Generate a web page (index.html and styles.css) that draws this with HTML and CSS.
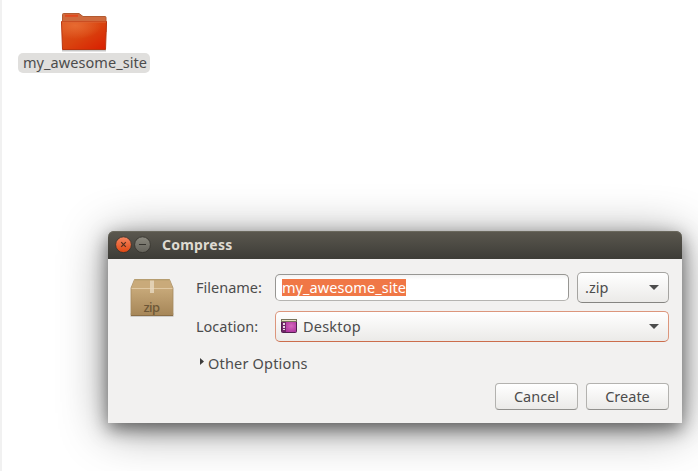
FILE: index.html
```html
<!DOCTYPE html>
<html lang="en">
<head>
<meta charset="utf-8">
<title>Compress</title>
<link rel="stylesheet" href="styles.css">
</head>
<body>
<main class="desktop">
  <div class="file">
    <svg class="folder" width="48" height="40" viewBox="0 0 48 40">
      <defs>
        <linearGradient id="front" x1="0" y1="0" x2="1" y2="1"><stop offset="0" stop-color="#d9551f"/><stop offset=".5" stop-color="#d9430f"/><stop offset="1" stop-color="#d91d00"/></linearGradient>
        <radialGradient id="shine" cx=".3" cy=".15" r=".6"><stop offset="0" stop-color="#e76a31"/><stop offset="1" stop-color="#e76a31" stop-opacity="0"/></radialGradient>
      </defs>
      <path d="M2 38.500H46" stroke="#000" stroke-opacity=".22" stroke-width="2"/>
      <path d="M2.500 20V2.500Q2.500 1.500 3.500 1.500H19L23 4.500H45Q46 4.500 46 5.500V20Z" fill="#cf6a3d" stroke="#b25a30"/>
      <path d="M5 3.800H18" stroke="#e2491d" stroke-width="2"/>
      <path d="M1.500 9.500H46.500L45.500 37.500H2.500Z" fill="url(#front)" stroke="#b8340e"/>
      <path d="M2 10H46L45 27Q28 24 3 33Z" fill="url(#shine)"/>
      <path d="M2 10H46" stroke="#dc6636"/>
    </svg>
    <span class="file-name"><span class="t-site">my_awesome_site</span></span>
  </div>

  <section class="dialog">
    <header class="titlebar">
      <svg width="38" height="20" viewBox="0 0 38 20">
        <defs>
          <linearGradient id="close" x2="0" y2="1"><stop offset="0" stop-color="#f58762"/><stop offset="1" stop-color="#e04711"/></linearGradient>
          <linearGradient id="mini" x2="0" y2="1"><stop offset="0" stop-color="#8b897f"/><stop offset="1" stop-color="#65635b"/></linearGradient>
        </defs>
        <circle cx="9.500" cy="9.700" r="7.900" fill="url(#close)" stroke="#35332e" stroke-width=".9"/>
        <path d="M7.200 7.200l4.600 4.600M11.800 7.200l-4.600 4.600" stroke="#54301f" stroke-width="1.200"/>
        <circle cx="28.500" cy="9.700" r="7.900" fill="url(#mini)" stroke="#35332e" stroke-width=".9"/>
        <path d="M25 9.500h7" stroke="#36342f"/>
      </svg>
      <h1><span class="t-title">Compress</span></h1>
    </header>
    <div class="content">
      <svg class="box" width="46" height="44" viewBox="0 0 46 44">
        <defs>
          <linearGradient id="card" x2="0" y2="1"><stop offset="0" stop-color="#d2b484"/><stop offset="1" stop-color="#a68658"/></linearGradient>
        </defs>
        <path d="M1.500 36V40H44.500V36Z" fill="#000" fill-opacity=".15"/>
        <path d="M5.500 2.500H40.500L44 11V38.500H2V11Z" fill="url(#card)" stroke="#a48a60" stroke-width=".8"/>
        <path d="M5.500 3H40.500L43.500 11H2.500Z" fill="#c9aa7a"/>
        <path d="M5.500 3H40.500" stroke="#baa06f"/>
        <path d="M2.500 11.500H43.500" stroke="#e0c8a2"/>
        <path d="M21 3.500H25V16H21Z" fill="#eadcc5" fill-opacity=".75"/>
        <path d="M2 38.500H44" stroke="#8b6e46"/>
        <text class="zip" x="14.500" y="35" textLength="16.500">zip</text>
      </svg>
      <div class="form">
        <div class="row">
          <label><span class="t-file">Filename:</span></label>
          <div class="entry"><span class="selected"><span class="t-site">my_awesome_site</span></span></div>
          <div class="combo ext"><span class="t-ext">.zip</span><i class="arrow"></i></div>
        </div>
        <div class="row second">
          <label><span class="t-loc">Location:</span></label>
          <div class="combo location">
            <svg width="16" height="14" viewBox="0 0 16 14">
              <defs><radialGradient id="wall" cx=".65" cy=".5" r=".6"><stop offset="0" stop-color="#d568bd"/><stop offset="1" stop-color="#a62b98"/></radialGradient></defs>
              <rect x=".5" y=".5" width="15" height="13" rx="1" fill="url(#wall)" stroke="#52204f"/>
              <path d="M0 0H16V3H0Z" fill="#77745c"/><path d="M1 1.500H15" stroke="#e5e2c5"/>
              <path d="M1 3H5V13H1Z" fill="#702867"/><path d="M2 4h2v2H2zM2 7h2v2H2zM2 10h2v1H2z" fill="#e7d7e4"/>
            </svg>
            <span class="t-desk">Desktop</span><i class="arrow"></i>
          </div>
        </div>
        <div class="expander"><i></i><span class="t-other">Other Options</span></div>
        <div class="actions">
          <button><span class="t-cancel">Cancel</span></button>
          <button><span class="t-create">Create</span></button>
        </div>
      </div>
    </div>
  </section>
</main>
</body>
</html>
```
FILE: styles.css
```css
* { box-sizing: border-box; }
body {
  margin: 0;
  font: 14.5px/20px "Noto Sans", "Open Sans", sans-serif;
  color: #4c4c4c;
  background: #fff;
}
.desktop {
  width: 698px;
  height: 471px;
  overflow: hidden;
  border-left: 2px solid #f1f1f1;
}
.file {
  width: 132px;
  height: 219px;
  margin: 12px 0 0 16px;
  display: flex;
  flex-direction: column;
  align-items: center;
}
.folder { display: block; flex: none; }
.file-name {
  width: 132px;
  height: 20px;
  margin-top: 1px;
  padding-left: 5px;
  border-radius: 5px;
  background: #e0dfdd;
  line-height: 19px;
}
span { white-space: nowrap; }
.t-site { letter-spacing: .06px; }
.t-title { letter-spacing: .22px; }
.t-other { letter-spacing: .18px; }
.t-desk { letter-spacing: .2px; }
.dialog {
  width: 574px;
  height: 192px;
  margin-left: 106px;
  border-radius: 6px 6px 0 0;
  background: #f2f1f0;
  box-shadow: 0 6px 18px rgba(0, 0, 0, .5), 0 6px 48px rgba(0, 0, 0, .42);
}
.titlebar {
  height: 28px;
  padding-left: 6px;
  display: flex;
  align-items: center;
  border-radius: 6px 6px 0 0;
  background: linear-gradient(#5b584f, #3d3c37);
  box-shadow: inset 0 1px #6a685d;
}
.titlebar h1 {
  margin: 0 0 0 10px;
  font-size: 14px;
  font-weight: 700;
  line-height: 20px;
  color: #dfdbd2;
}
.content { display: flex; padding: 13px 13px 0 21px; }
.box { margin-top: 5px; flex: none; }
.zip { font: 500 13px "Noto Sans", sans-serif; fill: #6c5737; }
.form { margin-left: 21px; flex: 1; }
.row { display: flex; align-items: center; height: 31px; }
.second { margin-top: 8px; }
.row label { width: 79px; flex: none; padding-bottom: 2px; }
.entry {
  width: 294px;
  height: 27px;
  padding: 3px 6px;
  border: 1px solid #979693;
  border-bottom-color: #b5b4b1;
  border-radius: 5px;
  background: linear-gradient(#f3f3f3, #fff 5px);
}
.selected {
  display: block;
  width: 124px;
  height: 17px;
  margin-top: 1px;
  line-height: 17px;
  background: #f07746;
  color: #fff;
}
.combo {
  height: 31px;
  display: flex;
  align-items: center;
  border: 1px solid #a5a4a1;
  border-bottom-color: #858481;
  border-radius: 5px;
  background: linear-gradient(#fff, #ebeae8);
}
.combo span { padding-bottom: 2px; }
.ext { width: 92px; margin-left: 8px; padding: 0 9px 0 7px; }
.location { width: 394px; padding: 0 9px 0 5px; border-color: #dc967c; border-bottom-color: #cc6d4c; }
.location svg { margin-bottom: 1px; }
.location span { margin-left: 6px; }
.arrow {
  width: 10px;
  height: 5px;
  margin-left: auto;
  background: #4c4c4c;
  clip-path: polygon(0 0, 100% 0, 50% 100%);
}
.expander { display: flex; align-items: center; height: 20px; margin-top: 11px; padding-left: 4px; }
.expander i { width: 4px; height: 7px; margin: -3px 4px 0 0; background: #3c3c3c; clip-path: polygon(0 0, 100% 50%, 0 100%); }
.actions { display: flex; justify-content: flex-end; gap: 8px; margin-top: 10px; }
button {
  width: 83px;
  height: 27px;
  padding: 0 0 2px;
  border: 1px solid #b3b2af;
  border-bottom-color: #92918e;
  border-radius: 4px;
  background: linear-gradient(#fff, #ebeae8);
  color: inherit;
  font: inherit;
}
```
